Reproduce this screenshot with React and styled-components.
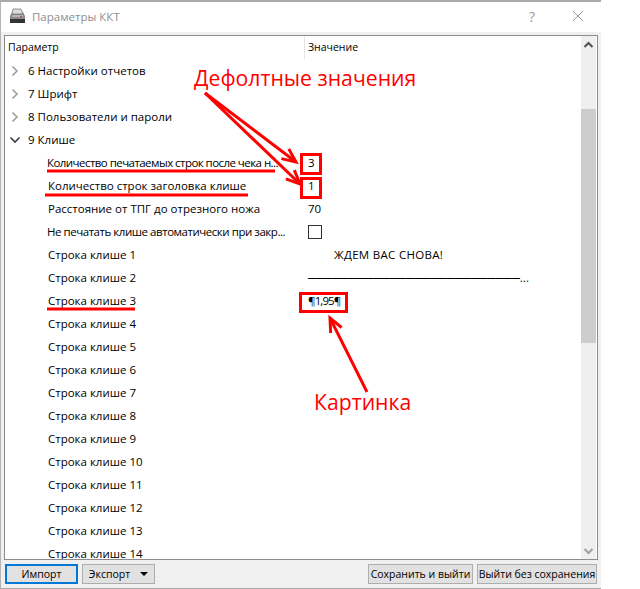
import React from "react";
import styled, { createGlobalStyle } from "styled-components";

const GlobalStyle = createGlobalStyle`
  html, body {
    margin: 0;
    padding: 0;
    background: #fff;
  }
`;

const Page = styled.div`
  position: relative;
  width: 640px;
  height: 589px;
  overflow: hidden;
  font-family: "Open Sans", "Noto Sans", sans-serif;
  font-size: 11.5px;
  color: #000;
`;

const Window = styled.div`
  width: 601px;
  height: 589px;
  box-sizing: border-box;
  border-top: 2px solid #a9a9a9;
  border-left: 1px solid #b4b4b4;
  border-bottom: 1px solid #a9a9a9;
  background: #f0f0f0;
  display: flex;
  flex-direction: column;
`;

const TitleBar = styled.div`
  height: 30px;
  flex: none;
  box-sizing: border-box;
  padding: 0 0 2px 8px;
  background: #fff;
  display: flex;
  align-items: center;
  color: #8f8f8f;
  font-size: 11.5px;
`;

const TitleText = styled.span`
  margin-left: 6px;
  flex: 1;
`;

const TitleButton = styled.div`
  width: 46px;
  display: flex;
  justify-content: center;
  align-items: center;
  color: #9a9a9a;
  font-size: 14px;
`;

const Body = styled.div`
  flex: 1;
  min-height: 0;
  display: flex;
  flex-direction: column;
  padding: 3px 3px 0 3px;
`;

const TreeFrame = styled.div`
  height: 525px;
  flex: none;
  box-sizing: border-box;
  border: 1px solid #8c8c8c;
  background: #fff;
  display: flex;
  overflow: hidden;
`;

const TreeArea = styled.div`
  flex: 1;
  min-width: 0;
`;

const HeaderRow = styled.div`
  height: 23px;
  display: flex;
`;

const HeaderCell = styled.div`
  width: ${(p) => p.$width}px;
  box-sizing: border-box;
  padding-left: ${(p) => p.$pad}px;
  padding-top: 3px;
  font-size: 10.5px;
  line-height: 17px;
  border-right: ${(p) => (p.$divider ? "1px solid #e5e5e5" : "none")};
`;

const Row = styled.div`
  height: 23px;
  display: flex;
  align-items: center;
`;

const NameCell = styled.div`
  width: 299px;
  flex: none;
  box-sizing: border-box;
  display: flex;
  align-items: center;
  padding-left: ${(p) => (p.$group ? 4 : p.$squeeze ? 42 : 43)}px;
  letter-spacing: ${(p) => p.$squeeze || 0}px;
  white-space: nowrap;
  overflow: hidden;
`;

const Chevron = styled.svg`
  width: 12px;
  height: 12px;
  margin-right: 7px;
  flex: none;
`;

const ValueCell = styled.div`
  flex: 1;
  padding-left: ${(p) => p.$pad || 4}px;
  letter-spacing: ${(p) => p.$squeeze || 0}px;
  white-space: nowrap;
`;

const Check = styled.div`
  width: 12px;
  height: 12px;
  border: 1px solid #333;
`;

const Scrollbar = styled.div`
  width: 15px;
  flex: none;
  margin-right: 1px;
  background: #efefef;
  display: flex;
  flex-direction: column;
  align-items: center;
`;

const ScrollEnd = styled.svg`
  width: 15px;
  height: 17px;
  flex: none;
`;

const ScrollTrack = styled.div`
  flex: 1;
  width: 100%;
  padding-top: 56px;
  padding-bottom: 199px;
  box-sizing: border-box;
  display: flex;
`;

const ScrollThumb = styled.div`
  flex: 1;
  background: #cdcdcd;
`;

const Footer = styled.div`
  flex: 1;
  display: flex;
  align-items: flex-start;
  padding-top: 4px;
  gap: 4px;
`;

const Button = styled.div`
  height: 20px;
  box-sizing: border-box;
  width: ${(p) => p.$width}px;
  margin-left: ${(p) => p.$left || 0}px;
  background: #e1e1e1;
  border: ${(p) => (p.$focus ? "2px solid #0078d7" : "1px solid #adadad")};
  display: flex;
  align-items: center;
  justify-content: center;
  white-space: nowrap;
  font-size: 10.5px;
`;

const Caret = styled.span`
  width: 0;
  height: 0;
  margin-left: 10px;
  border-left: 4px solid transparent;
  border-right: 4px solid transparent;
  border-top: 4px solid #000;
`;

const Overlay = styled.svg`
  position: absolute;
  left: 0;
  top: 0;
  pointer-events: none;
`;

const Callout = styled.div`
  position: absolute;
  left: ${(p) => p.$x}px;
  top: ${(p) => p.$y}px;
  color: #ff0000;
  font-size: 21.2px;
  line-height: 28px;
  white-space: nowrap;
`;

const groupsTop = ["6 Настройки отчетов", "7 Шрифт", "8 Пользователи и пароли"];

const rows = [
  { name: "Количество печатаемых строк после чека н...", value: "3", squeeze: -0.55 },
  { name: "Количество строк заголовка клише", value: "1" },
  { name: "Расстояние от ТПГ до отрезного ножа", value: "70" },
  { name: "Не печатать клише автоматически при закр...", check: true, squeeze: -0.46 },
  { name: "Строка клише 1", value: "ЖДЕМ ВАС СНОВА!", pad: 30, valueSqueeze: 0.3 },
  { name: "Строка клише 2", value: "─".repeat(26) + "..." },
  { name: "Строка клише 3", value: "¶1,95¶", valueSqueeze: -0.9 },
  ...[4, 5, 6, 7, 8, 9, 10, 11, 12, 13, 14].map((n) => ({ name: `Строка клише ${n}` })),
];

const PrinterIcon = () => (
  <svg width="17" height="16" viewBox="0 0 17 16">
    <path d="M1 8 L3 4 H14 L16 8 V14 H1 Z" fill="#8a8a8a" />
    <path d="M4 1 H12 L14 6 H3 Z" fill="#dcdcdc" stroke="#6e6e6e" strokeWidth="0.7" />
    <rect x="3" y="7" width="11" height="2" fill="#b5b5b5" />
    <rect x="1" y="11" width="15" height="4" fill="#333" />
    <rect x="11" y="8" width="2" height="1" fill="#c04040" />
  </svg>
);

const ChevronRight = () => (
  <Chevron viewBox="0 0 12 12">
    <path d="M3.5 1.5 L8 6 L3.5 10.5" fill="none" stroke="#a0a0a0" strokeWidth="1.7" />
  </Chevron>
);

const ChevronDown = () => (
  <Chevron viewBox="0 0 12 12">
    <path d="M1.5 3.5 L6 8 L10.5 3.5" fill="none" stroke="#404040" strokeWidth="1.7" />
  </Chevron>
);

const Arrow = ({ x1, y1, x2, y2 }) => {
  const a = Math.atan2(y2 - y1, x2 - x1);
  const len = 15;
  const spread = 0.42;
  const p1 = [x2 - len * Math.cos(a - spread), y2 - len * Math.sin(a - spread)];
  const p2 = [x2 - len * Math.cos(a + spread), y2 - len * Math.sin(a + spread)];
  return (
    <g stroke="#ff0000" strokeWidth="3" fill="none">
      <path d={`M${x1} ${y1} L${x2} ${y2}`} />
      <path d={`M${p1[0]} ${p1[1]} L${x2} ${y2} L${p2[0]} ${p2[1]}`} />
    </g>
  );
};

const App = () => {
  return (
    <Page>
      <GlobalStyle />
      <Window>
        <TitleBar>
          <PrinterIcon />
          <TitleText>Параметры ККТ</TitleText>
          <TitleButton>?</TitleButton>
          <TitleButton>
            <svg width="12" height="12" viewBox="0 0 12 12">
              <path d="M1 1 L11 11 M11 1 L1 11" stroke="#9a9a9a" strokeWidth="1" />
            </svg>
          </TitleButton>
        </TitleBar>
        <Body>
          <TreeFrame>
            <TreeArea>
              <HeaderRow>
                <HeaderCell $width={300} $pad={3} $divider>Параметр</HeaderCell>
                <HeaderCell $width={200} $pad={3}>Значение</HeaderCell>
              </HeaderRow>
              {groupsTop.map((g) => (
                <Row key={g}>
                  <NameCell $group>
                    <ChevronRight />
                    {g}
                  </NameCell>
                </Row>
              ))}
              <Row>
                <NameCell $group>
                  <ChevronDown />9 Клише
                </NameCell>
              </Row>
              {rows.map((r) => (
                <Row key={r.name}>
                  <NameCell $squeeze={r.squeeze}>{r.name}</NameCell>
                  <ValueCell $pad={r.pad} $squeeze={r.valueSqueeze}>
                    {r.check ? <Check /> : r.value}
                  </ValueCell>
                </Row>
              ))}
            </TreeArea>
            <Scrollbar>
              <ScrollEnd viewBox="0 0 15 17">
                <path d="M3.5 11 L7.5 7 L11.5 11" fill="none" stroke="#505050" strokeWidth="2" />
              </ScrollEnd>
              <ScrollTrack>
                <ScrollThumb />
              </ScrollTrack>
              <ScrollEnd viewBox="0 0 15 17">
                <path d="M3.5 7 L7.5 11 L11.5 7" fill="none" stroke="#a0a0a0" strokeWidth="2" />
              </ScrollEnd>
            </Scrollbar>
          </TreeFrame>
          <Footer>
            <Button $focus $width={73} $left={1}>Импорт</Button>
            <Button $width={73}>
              Экспорт
              <Caret />
            </Button>
            <Button $width={105} $left={209}>Сохранить и выйти</Button>
            <Button $width={120}>Выйти без сохранения</Button>
          </Footer>
        </Body>
      </Window>

      <Callout $x={194} $y={64}>Дефолтные значения</Callout>
      <Callout $x={314} $y={388}>Картинка</Callout>

      <Overlay width="640" height="589" viewBox="0 0 640 589">
        <g stroke="#ff0000" fill="none">
          <path d="M47 171 H275" strokeWidth="3" />
          <path d="M45 195 H248" strokeWidth="3" />
          <path d="M47 309 H135" strokeWidth="3" />
          <rect x="301.5" y="154.5" width="19" height="19" strokeWidth="3" />
          <rect x="301.5" y="178.5" width="19" height="19" strokeWidth="3" />
          <rect x="300.5" y="293.5" width="46" height="18" strokeWidth="3" />
        </g>
        <Arrow x1={205} y1={93} x2={296} y2={162} />
        <Arrow x1={205} y1={93} x2={300} y2={184} />
        <Arrow x1={367} y1={392} x2={330} y2={318} />
      </Overlay>
    </Page>
  );
};

export default App;
